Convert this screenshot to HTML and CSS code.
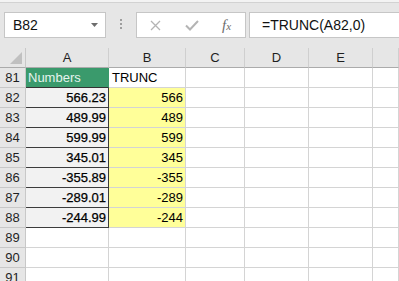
FILE: index.html
```html
<!DOCTYPE html>
<html lang="en">
<head>
    <meta charset="UTF-8">
    <title>TRUNC</title>
    <link rel="stylesheet" href="styles.css">
</head>
<body>
    <div class="topline"></div>

    <div class="formula-bar">
        <div class="name-box">
            <span class="name-text">B82</span>
            <svg class="caret" width="7" height="4" viewBox="0 0 7 4"><path d="M0 0 H7 L3.5 4 Z" fill="#6d6d6d"/></svg>
        </div>
        <div class="grip">
            <span></span><span></span><span></span>
        </div>
        <div class="edit-box">
            <svg class="icon-x" width="11" height="11" viewBox="0 0 11 11"><path d="M1 1 L10 10 M10 1 L1 10" stroke="#b4b4b4" stroke-width="1.3" fill="none"/></svg>
            <svg class="icon-ok" width="14" height="11" viewBox="0 0 14 11"><path d="M1 5.5 L5 9.5 L13 1" stroke="#b4b4b4" stroke-width="2" fill="none"/></svg>
            <span class="fx">f<span>x</span></span>
        </div>
        <div class="formula">=TRUNC(A82,0)</div>
    </div>

    <div class="sheet">
        <div class="hd corner"><span class="tri"></span></div>
        <div class="hd col">A</div>
        <div class="hd col">B</div>
        <div class="hd col">C</div>
        <div class="hd col">D</div>
        <div class="hd col">E</div>
        <div class="hd col"></div>

        <div class="hd row">81</div>
        <div class="c title">Numbers</div>
        <div class="c">TRUNC</div>
        <div class="c"></div><div class="c"></div><div class="c"></div><div class="c"></div>

        <div class="hd row">82</div>
        <div class="c num src">566.23</div>
        <div class="c num res">566</div>
        <div class="c"></div><div class="c"></div><div class="c"></div><div class="c"></div>

        <div class="hd row">83</div>
        <div class="c num src">489.99</div>
        <div class="c num res">489</div>
        <div class="c"></div><div class="c"></div><div class="c"></div><div class="c"></div>

        <div class="hd row">84</div>
        <div class="c num src">599.99</div>
        <div class="c num res">599</div>
        <div class="c"></div><div class="c"></div><div class="c"></div><div class="c"></div>

        <div class="hd row">85</div>
        <div class="c num src">345.01</div>
        <div class="c num res">345</div>
        <div class="c"></div><div class="c"></div><div class="c"></div><div class="c"></div>

        <div class="hd row">86</div>
        <div class="c num src">-355.89</div>
        <div class="c num res">-355</div>
        <div class="c"></div><div class="c"></div><div class="c"></div><div class="c"></div>

        <div class="hd row">87</div>
        <div class="c num src">-289.01</div>
        <div class="c num res">-289</div>
        <div class="c"></div><div class="c"></div><div class="c"></div><div class="c"></div>

        <div class="hd row">88</div>
        <div class="c num src">-244.99</div>
        <div class="c num res">-244</div>
        <div class="c"></div><div class="c"></div><div class="c"></div><div class="c"></div>

        <div class="hd row">89</div>
        <div class="c"></div><div class="c"></div><div class="c"></div><div class="c"></div><div class="c"></div><div class="c"></div>

        <div class="hd row">90</div>
        <div class="c"></div><div class="c"></div><div class="c"></div><div class="c"></div><div class="c"></div><div class="c"></div>

        <div class="hd row">91</div>
        <div class="c"></div><div class="c"></div><div class="c"></div><div class="c"></div><div class="c"></div><div class="c"></div>
    </div>
</body>
</html>
```

FILE: styles.css
```css
* {
    margin: 0;
    padding: 0;
    box-sizing: border-box;
}

body {
    font-family: 'Liberation Sans', Arial, sans-serif;
    font-size: 13px;
    background: #e6e6e6;
    color: #000;
    overflow: hidden;
    width: 399px;
    height: 281px;
}

.topline {
    height: 3px;
    background: #f3f3f3;
    border-bottom: 1px solid #d2d2d2;
}

/* Formula bar */
.formula-bar {
    display: flex;
    align-items: flex-start;
    height: 45px;
    padding-top: 9px;
}

.name-box {
    display: flex;
    align-items: center;
    justify-content: space-between;
    margin-left: 4px;
    width: 102px;
    height: 26px;
    padding: 0 7px 0 8px;
    background: #fff;
    border: 1px solid #c6c6c6;
    font-size: 14px;
    color: #111;
}

.grip {
    display: flex;
    flex-direction: column;
    gap: 2px;
    margin: 7px 0 0 14px;
}

.grip span {
    width: 2px;
    height: 2px;
    background: #9e9e9e;
}

.edit-box {
    display: flex;
    align-items: center;
    margin-left: 14px;
    width: 110px;
    height: 26px;
    padding-left: 13px;
    background: #fff;
    border: 1px solid #c6c6c6;
}

.icon-ok {
    margin-left: 24px;
}

.fx {
    margin-left: 23px;
    font-family: 'Liberation Serif', serif;
    font-style: italic;
    font-size: 15px;
    color: #6d6d6d;
}

.fx span {
    font-size: 11px;
}

.formula {
    flex: 1;
    margin-left: 3px;
    height: 26px;
    padding-left: 12px;
    line-height: 24px;
    background: #fff;
    border: 1px solid #c6c6c6;
    border-right: none;
    font-size: 14px;
    color: #111;
}

/* Sheet grid */
.sheet {
    display: grid;
    grid-template-columns: 26px 83px 77px 59px 64px 64px 1fr;
    grid-auto-rows: 20px;
    background: #fff;
}

.hd {
    background: #e6e6e6;
    color: #1f1f1f;
    border-right: 1px solid #c8c8c8;
    border-bottom: 1px solid #c8c8c8;
    display: flex;
    align-items: flex-end;
    justify-content: center;
    padding-bottom: 2px;
    font-size: 13px;
}

.hd.col {
    border-right-color: #cfcfcf;
    border-bottom-color: #ababab;
}

.hd.corner {
    position: relative;
    border-bottom-color: #ababab;
}

.tri {
    position: absolute;
    right: 3px;
    bottom: 3px;
    width: 0;
    height: 0;
    border-left: 12px solid transparent;
    border-bottom: 12px solid #c0c0c0;
}

.c {
    border-right: 1px solid #d4d4d4;
    border-bottom: 1px solid #d4d4d4;
    display: flex;
    align-items: flex-end;
    padding: 0 2px 2px 3px;
    white-space: nowrap;
    overflow: hidden;
}

.c.num {
    justify-content: flex-end;
}

.c.title {
    background: #3a9a6c;
    color: #e6f4ef;
    padding-left: 2px;
    border-right-color: #3a9a6c;
    border-bottom-color: #333;
}

.c.src {
    background: #f2f2f2;
    color: #000;
    -webkit-text-stroke: 0.25px #000;
    border-right-color: #3c3c3c;
    border-bottom-color: #3c3c3c;
}

.c.res {
    background: #ffff99;
}
```
